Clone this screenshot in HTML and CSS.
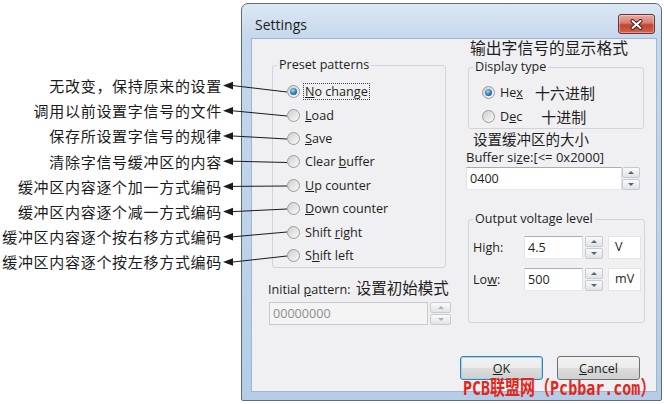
FILE: index.html
```html
<!DOCTYPE html>
<html lang="zh">
<head>
  <meta charset="UTF-8">
  <title>Settings</title>
  <link rel="stylesheet" href="styles.css">
</head>
<body>

<div class="notes">
  <div class="note">无改变，保持原来的设置</div>
  <div class="note">调用以前设置字信号的文件</div>
  <div class="note">保存所设置字信号的规律</div>
  <div class="note">清除字信号缓冲区的内容</div>
  <div class="note">缓冲区内容逐个加一方式编码</div>
  <div class="note">缓冲区内容逐个减一方式编码</div>
  <div class="note">缓冲区内容逐个按右移方式编码</div>
  <div class="note">缓冲区内容逐个按左移方式编码</div>
</div>

<div class="window">
  <div class="titlebar">
    <span class="title">Settings</span>
    <button class="close">
      <svg width="13" height="11" viewBox="0 0 13 11">
        <path d="M2.5 2 L10.5 9 M10.5 2 L2.5 9" stroke="#4a1c16" stroke-width="4" stroke-linecap="round"/>
        <path d="M2.5 2 L10.5 9 M10.5 2 L2.5 9" stroke="#fff" stroke-width="2" stroke-linecap="round"/>
      </svg>
    </button>
  </div>

  <div class="client">
    <div class="panes">
      <div class="pane-left">
        <fieldset class="group preset">
          <legend>Preset patterns</legend>
          <div class="opts">
            <div class="opt"><span class="radio on"></span><span class="lbl focus"><u>N</u>o change</span></div>
            <div class="opt"><span class="radio"></span><span class="lbl"><u>L</u>oad</span></div>
            <div class="opt"><span class="radio"></span><span class="lbl"><u>S</u>ave</span></div>
            <div class="opt"><span class="radio"></span><span class="lbl">Clear <u>b</u>uffer</span></div>
            <div class="opt"><span class="radio"></span><span class="lbl"><u>U</u>p counter</span></div>
            <div class="opt"><span class="radio"></span><span class="lbl"><u>D</u>own counter</span></div>
            <div class="opt"><span class="radio"></span><span class="lbl">Shift <u>r</u>ight</span></div>
            <div class="opt"><span class="radio"></span><span class="lbl">S<u>h</u>ift left</span></div>
          </div>
        </fieldset>

        <div class="init-label">Initial <u>p</u>attern: <span class="cn">设置初始模式</span></div>
        <div class="spin-field disabled">
          <div class="field">00000000</div>
          <div class="spin"><span class="up"></span><span class="down"></span></div>
        </div>
      </div>

      <div class="pane-right">
        <div class="cn heading">输出字信号的显示格式</div>
        <fieldset class="group display">
          <legend>Display type</legend>
          <div class="opts">
            <div class="opt"><span class="radio on"></span><span class="lbl">He<u>x</u></span><span class="cn note-hex">十六进制</span></div>
            <div class="opt"><span class="radio"></span><span class="lbl">D<u>e</u>c</span><span class="cn note-dec">十进制</span></div>
          </div>
        </fieldset>

        <div class="cn buf-note">设置缓冲区的大小</div>
        <div class="buf-label">Buffer si<u>z</u>e:[&lt;= 0x2000]</div>
        <div class="spin-field buf">
          <div class="field">0400</div>
          <div class="spin"><span class="up"></span><span class="down"></span></div>
        </div>

        <fieldset class="group voltage">
          <legend>Output voltage level</legend>
          <div class="vrows">
            <div class="vrow">
              <span class="vlabel">Hi<u>g</u>h:</span>
              <div class="field">4.5</div>
              <div class="spin"><span class="up"></span><span class="down"></span></div>
              <span class="unit">V</span>
            </div>
            <div class="vrow">
              <span class="vlabel">Lo<u>w</u>:</span>
              <div class="field">500</div>
              <div class="spin"><span class="up"></span><span class="down"></span></div>
              <span class="unit">mV</span>
            </div>
          </div>
        </fieldset>
      </div>
    </div>

    <div class="buttons">
      <button class="btn default"><u>O</u>K</button>
      <button class="btn"><u>C</u>ancel</button>
    </div>
  </div>
</div>

<!-- leader lines from the notes to the radio buttons -->
<svg class="leaders" width="664" height="404" viewBox="0 0 664 404">
  <g stroke="#1a1a1a" stroke-width="1" fill="none">
    <path d="M233 85.6 L287 92"/>
    <path d="M233 110.8 L287 116"/>
    <path d="M233 136 L287 139"/>
    <path d="M233 161.2 L287 162.5"/>
    <path d="M233 186.4 L287 186"/>
    <path d="M233 211.6 L287 209"/>
    <path d="M233 236.8 L287 232"/>
    <path d="M233 262 L287 256"/>
  </g>
  <g fill="#1a1a1a">
    <polygon points="223,85.6 233,81.8 233,89.4"/>
    <polygon points="223,110.8 233,107 233,114.6"/>
    <polygon points="223,136 233,132.2 233,139.8"/>
    <polygon points="223,161.2 233,157.4 233,165"/>
    <polygon points="223,186.4 233,182.6 233,190.2"/>
    <polygon points="223,211.6 233,207.8 233,215.4"/>
    <polygon points="223,236.8 233,233 233,240.6"/>
    <polygon points="223,262 233,258.2 233,265.8"/>
  </g>
</svg>

<div class="watermark">PCB联盟网（Pcbbar.com）</div>

</body>
</html>
```

FILE: styles.css
```css
body {
  margin: 0;
  width: 664px;
  height: 404px;
  display: flex;
  position: relative;
  overflow: hidden;
  background: #fff;
  font-family: "Open Sans", "Noto Sans", sans-serif;
  color: #1e1e1e;
}
.cn {
  font-family: "Noto Sans CJK SC", sans-serif;
}

/* notes on the left */
.notes {
  width: 241px;
  flex: none;
  box-sizing: border-box;
  padding: 73px 19px 0 0;
  text-align: right;
  font-family: "Noto Sans CJK SC", sans-serif;
  font-size: 15px;
  letter-spacing: 0.7px;
  color: #1b1b1b;
}
.note {
  height: 25.2px;
  line-height: 25.2px;
  white-space: nowrap;
}

/* window frame */
.window {
  width: 421px;
  height: 398px;
  margin-top: 3px;
  flex: none;
  box-sizing: border-box;
  border: 1px solid #5d6c7c;
  border-radius: 7px 7px 2px 2px;
  background: linear-gradient(#dce7f4, #c4d7ed 36px, #bcd3ea 60%, #b3cde9);
  padding: 0 4px 8px 9px;
  display: flex;
  flex-direction: column;
}
.titlebar {
  height: 34px;
  box-sizing: border-box;
  padding-top: 6px;
  display: flex;
  align-items: center;
  justify-content: space-between;
}
.title {
  margin-left: 4px;
  font-size: 14px;
  color: #1c1c1c;
}
.close {
  width: 37px;
  height: 20px;
  margin-right: 2px;
  padding: 0;
  border: 1px solid #6b332c;
  border-radius: 3px;
  background: linear-gradient(#e9aca3, #d67c70 45%, #c4432f 55%, #d0654f);
  box-shadow: inset 0 0 0 1px rgba(255, 255, 255, 0.35);
  display: flex;
  align-items: center;
  justify-content: center;
}

.client {
  flex: 1;
  background: #f0f0f2;
  border: 1px solid #a3b6cb;
  display: flex;
  flex-direction: column;
}
.panes {
  display: flex;
  padding-left: 16px;
}
.pane-left {
  width: 184px;
  padding-top: 18px;
}
.pane-right {
  width: 180px;
  margin-left: 14px;
}

/* group boxes */
.group {
  margin: 0;
  padding: 0;
  border: 1px solid #d0d5da;
  border-radius: 3px;
  box-sizing: border-box;
}
.group legend {
  margin-left: 4px;
  padding: 0 2px;
  font-size: 12.6px;
  line-height: 16px;
}
.preset {
  margin-left: 4px;
  width: 174px;
  height: 211px;
}
.opts {
  padding: 7px 0 0 14px;
}
.opt {
  height: 23.4px;
  display: flex;
  align-items: center;
  font-size: 12.6px;
}
.radio {
  width: 13px;
  height: 13px;
  flex: none;
  box-sizing: border-box;
  border-radius: 50%;
  border: 1px solid #9c9c9c;
  background: linear-gradient(135deg, #cfcfcf, #f9f9f9);
  position: relative;
}
.radio.on::after {
  content: "";
  position: absolute;
  left: 2px;
  top: 2px;
  width: 7px;
  height: 7px;
  border-radius: 50%;
  background: radial-gradient(circle at 40% 35%, #9adaf8, #2c78ad 55%, #12476f);
}
.lbl {
  margin-left: 3px;
  padding: 0 1px;
  border: 1px dotted transparent;
  line-height: 15px;
  white-space: nowrap;
}
.lbl.focus {
  border-color: #444;
}

.init-label {
  margin-top: 10px;
  font-size: 12.6px;
  line-height: 18px;
  white-space: nowrap;
}
.init-label .cn {
  font-size: 15.5px;
  margin-left: 2px;
}

/* edit boxes with spinners */
.spin-field {
  display: flex;
  margin-top: 3px;
  margin-left: 1px;
}
.field {
  width: 159px;
  height: 23px;
  box-sizing: border-box;
  border: 1px solid #abadb3;
  border-color: #abadb3 #dbdfe6 #e3e9ef #e2e3ea;
  background: #fff;
  font-size: 12.6px;
  padding-left: 3px;
  display: flex;
  align-items: center;
}
.disabled .field {
  background: #f4f4f4;
  color: #8d8d8d;
  border-color: #c9c9c9;
}
.spin {
  width: 21px;
  height: 23px;
  margin-left: 2px;
  display: flex;
  flex-direction: column;
  gap: 1px;
}
.spin span {
  flex: 1;
  border: 1px solid #c6cbd1;
  border-radius: 2px;
  background: linear-gradient(#fafafa, #e3e3e3);
  display: flex;
  align-items: center;
  justify-content: center;
}
.spin .up::after {
  content: "";
  border-left: 3px solid transparent;
  border-right: 3px solid transparent;
  border-bottom: 3px solid #506580;
}
.spin .down::after {
  content: "";
  border-left: 3px solid transparent;
  border-right: 3px solid transparent;
  border-top: 3px solid #506580;
}
.disabled .spin span::after {
  border-bottom-color: #a9b1bb;
  border-top-color: #a9b1bb;
}

/* right pane */
.heading {
  font-size: 15.8px;
  line-height: 18px;
  padding-left: 4px;
  white-space: nowrap;
}
.display {
  margin: 2px 0 0 2px;
  width: 176px;
}
.display .opts {
  padding: 5px 0 0 13px;
}
.display .opt {
  height: 24px;
}
.note-hex {
  margin-left: 10px;
  font-size: 15px;
}
.note-dec {
  margin-left: 17px;
  font-size: 15px;
}
.buf-note {
  font-size: 14.5px;
  line-height: 20px;
  padding-left: 7px;
}
.buf-label {
  font-size: 13px;
  line-height: 16px;
  white-space: nowrap;
}
.buf {
  margin: 2px 0 0 0;
}
.buf .field {
  width: 156px;
}
.buf .spin {
  width: 18px;
  margin-left: 0;
}
.voltage {
  margin: 21px 0 0 2px;
  width: 177px;
}
.vrows {
  padding: 9px 0 31px 4px;
  display: flex;
  flex-direction: column;
  gap: 9px;
}
.vrow {
  display: flex;
  align-items: center;
  font-size: 12.6px;
}
.vlabel {
  width: 51px;
}
.vrow .field {
  width: 59px;
}
.vrow .spin {
  width: 18px;
}
.unit {
  margin-left: 5px;
  width: 33px;
  height: 23px;
  box-sizing: border-box;
  background: #fff;
  border: 1px solid #e4e4e4;
  padding: 1px 0 0 6px;
}

/* buttons */
.buttons {
  margin-top: auto;
  display: flex;
  justify-content: flex-end;
  gap: 14px;
  padding: 0 16px 11px 0;
}
.btn {
  width: 83px;
  height: 24px;
  padding: 0;
  border: 1px solid #707070;
  border-radius: 3px;
  background: linear-gradient(#f2f2f2, #ebebeb 50%, #dddddd 50%, #cfcfcf);
  font-family: "Open Sans", "Noto Sans", sans-serif;
  font-size: 12.6px;
  color: #1e1e1e;
}
.btn.default {
  border-color: #3c7fb1;
  box-shadow: inset 0 0 0 1px #98d6f2;
}

.leaders {
  position: absolute;
  left: 0;
  top: 0;
  pointer-events: none;
}
.watermark {
  position: absolute;
  left: 463px;
  top: 376px;
  font-family: "DejaVu Sans Mono", "Noto Sans CJK SC", monospace;
  font-weight: bold;
  font-size: 20px;
  line-height: 24px;
  color: #e3261c;
  white-space: nowrap;
  transform: scaleX(0.75);
  transform-origin: left;
}
```
